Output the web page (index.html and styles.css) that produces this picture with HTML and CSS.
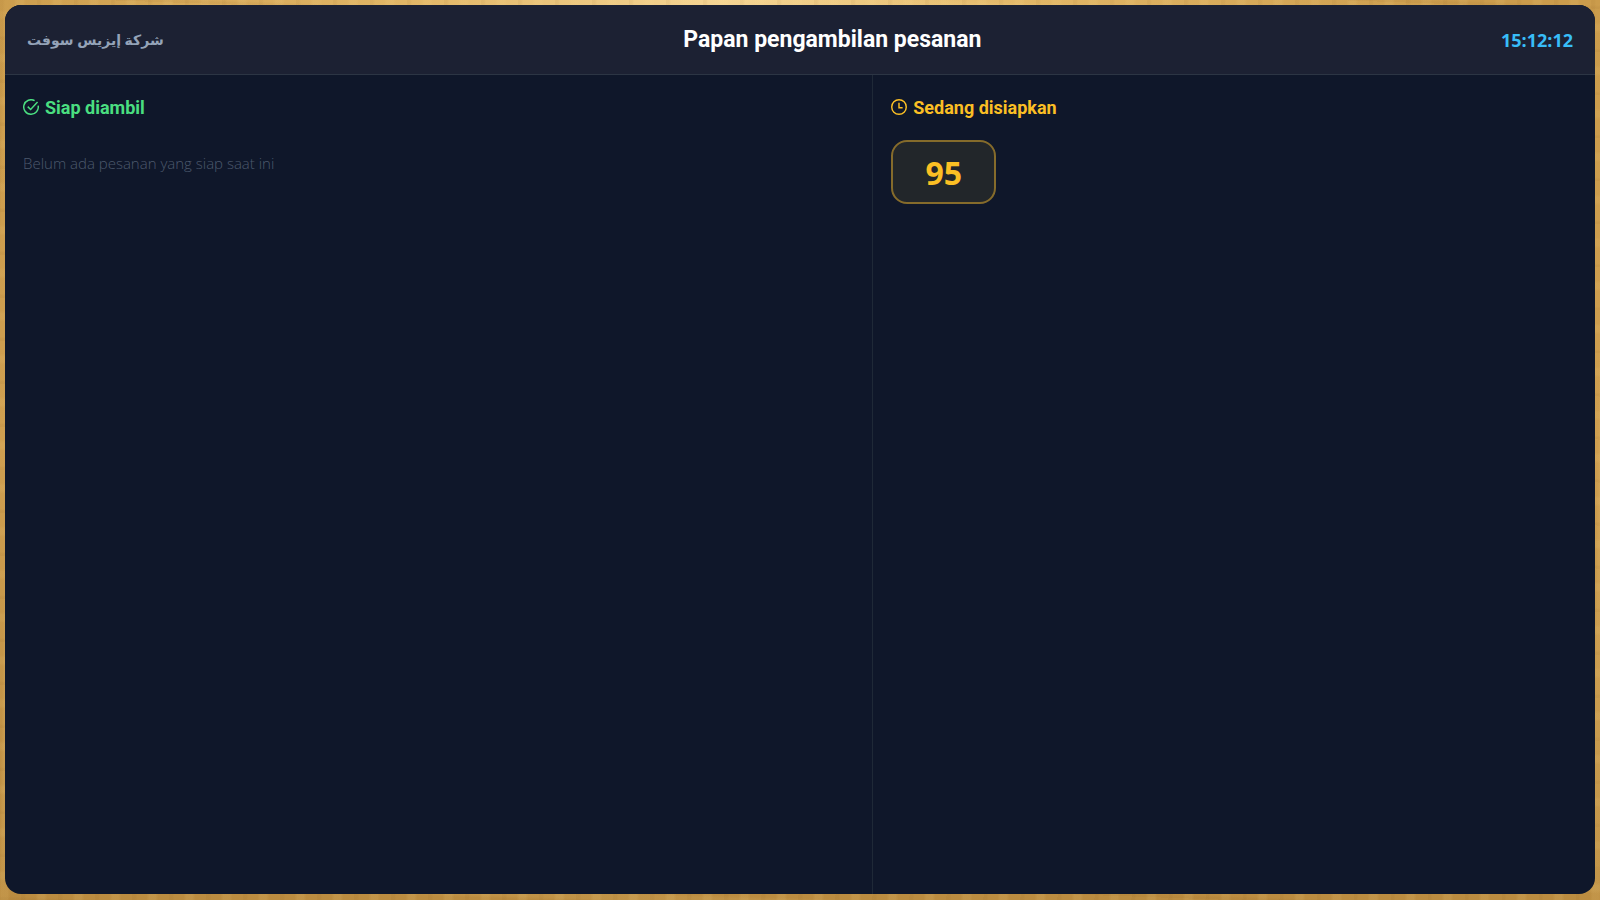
FILE: index.html
```html
<!DOCTYPE html>
<html lang="id">
<head>
    <meta charset="UTF-8">
    <meta name="viewport" content="width=device-width, initial-scale=1.0">
    <title>Papan pengambilan pesanan</title>
    <link rel="stylesheet" href="styles.css">
</head>
<body>
    <div class="board">
        <header class="board-header">
            <div class="company" lang="ar" dir="rtl">شركة إيزيس سوفت</div>
            <h1 class="title">Papan pengambilan pesanan</h1>
            <time class="clock">15:12:12</time>
        </header>
        <main class="columns">
            <section class="column ready">
                <h2 class="column-title">
                    <svg class="icon" viewBox="1 1 22 22" aria-hidden="true">
                        <path d="M21.8 10A10 10 0 1 1 17 3.34"/>
                        <path d="M7.5 11.5l4 4L21 5"/>
                    </svg>
                    Siap diambil
                </h2>
                <p class="empty">Belum ada pesanan yang siap saat ini</p>
            </section>
            <section class="column preparing">
                <h2 class="column-title">
                    <svg class="icon" viewBox="1 1 22 22" aria-hidden="true">
                        <circle cx="12" cy="12" r="10"/>
                        <path d="M12 6v7h5"/>
                    </svg>
                    Sedang disiapkan
                </h2>
                <div class="orders">
                    <div class="order">95</div>
                </div>
            </section>
        </main>
    </div>
</body>
</html>
```
FILE: styles.css
```css
*{
    box-sizing: border-box;
    margin: 0;
    padding: 0;
}
/* wood */
body{
    display: flex;
    min-height: 100vh;
    padding: 5px 5px 6px;
    font-family: "Open Sans", "Noto Sans", "DejaVu Sans", sans-serif;
    background:
        repeating-linear-gradient(91deg, rgba(120,75,20,0.06) 0 3px, transparent 5px 14px, rgba(255,225,150,0.1) 17px 23px, transparent 26px 37px),
        repeating-linear-gradient(2deg, rgba(120,75,20,0.06) 0 2px, transparent 4px 19px, rgba(255,225,150,0.08) 22px 27px, transparent 30px 43px),
        radial-gradient(ellipse at 45% 0, #f5d594 0, rgba(240,200,120,0.6) 25%, transparent 60%),
        linear-gradient(#cb9c4c, #cf9f50 50%, #bb8c40);
}
.board{
    flex: 1;
    display: flex;
    flex-direction: column;
    border-radius: 16px;
    overflow: hidden;
    background: #0f172a;
}
.board-header{
    display: flex;
    align-items: center;
    justify-content: space-between;
    height: 70px;
    padding: 0 22px;
    background: #1c2133;
    border-bottom: 1px solid #2c3544;
}
.company{
    font-size: 14px;
    font-weight: 700;
    color: #94a3b8;
}
.title{
    font-family: Roboto, "Open Sans", sans-serif;
    font-size: 23px;
    font-weight: 700;
    color: #fff;
}
.clock{
    font-size: 18px;
    font-weight: 700;
    color: #38bdf8;
}
.columns{
    flex: 1;
    display: grid;
    grid-template-columns: 1.2fr 1fr;
}
.column{
    padding: 18px;
}
.preparing{
    border-left: 1px solid #1f2937;
}
.column-title{
    display: flex;
    align-items: center;
    gap: 6px;
    height: 28px;
    margin-bottom: 19px;
    font-family: Roboto, "Open Sans", sans-serif;
    font-size: 18px;
    font-weight: 700;
}
.icon{
    width: 16px;
    height: 16px;
    fill: none;
    stroke: currentColor;
    stroke-width: 2;
}
.ready .column-title{
    color: #4ade80;
}
.preparing .column-title{
    color: #fbbf24;
}
.empty{
    padding-top: 11px;
    font-size: 15px;
    line-height: 24px;
    font-weight: 300;
    color: #4c596d;
}
.orders{
    display: flex;
    flex-wrap: wrap;
    gap: 12px;
}
.order{
    min-width: 105px;
    height: 64px;
    border: 2px solid #856b2b;
    border-radius: 16px;
    background: #22262a;
    color: #fbbf24;
    font-size: 32px;
    line-height: 62px;
    font-weight: 700;
    text-align: center;
}
```
